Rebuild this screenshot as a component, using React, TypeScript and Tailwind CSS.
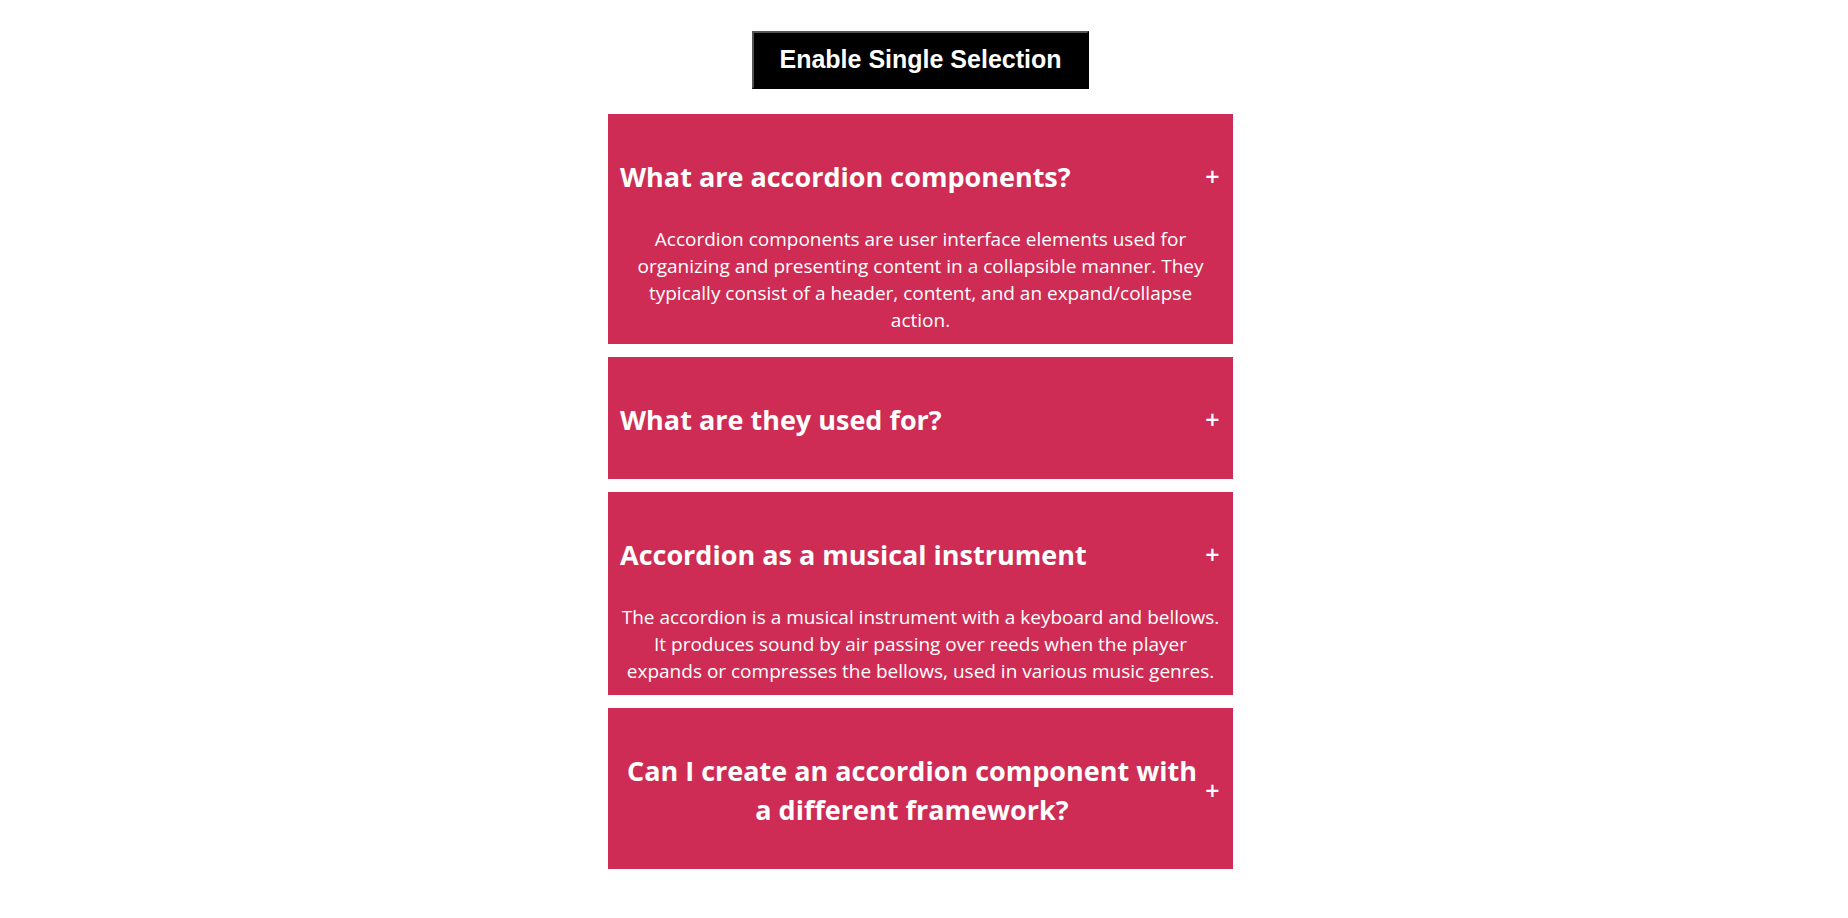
import { useState } from "react";

type Item = { id: string; question: string; answer: string };

const items: Item[] = [
  {
    id: "components",
    question: "What are accordion components?",
    answer:
      "Accordion components are user interface elements used for organizing and presenting content in a collapsible manner. They typically consist of a header, content, and an expand/collapse action.",
  },
  {
    id: "usage",
    question: "What are they used for?",
    answer:
      "They are employed in various contexts, including FAQs, product descriptions, settings menus, and data tables, to save screen space and improve user experience.",
  },
  {
    id: "instrument",
    question: "Accordion as a musical instrument",
    answer:
      "The accordion is a musical instrument with a keyboard and bellows. It produces sound by air passing over reeds when the player expands or compresses the bellows, used in various music genres.",
  },
  {
    id: "framework",
    question: "Can I create an accordion component with a different framework?",
    answer:
      "Yes, of course, it is very possible to create an accordion component with another framework.",
  },
];

type PanelProps = { item: Item; open: boolean; onToggle: () => void };

function Panel({ item, open, onToggle }: PanelProps) {
  return (
    <section className="bg-[#ce2c54] px-3 pt-[14px] pb-[10px]">
      <h2>
        <button
          type="button"
          aria-expanded={open}
          aria-controls={`${item.id}-answer`}
          onClick={onToggle}
          className="flex w-full cursor-pointer items-center justify-between pt-[29px] pb-[30px]"
        >
          <span className="text-center text-[27px] leading-[39px] font-bold">{item.question}</span>
          <span className="w-[17px] shrink-0 text-center text-[25px] leading-[39px] font-semibold">+</span>
        </button>
      </h2>
      <div id={`${item.id}-answer`} hidden={!open} className="text-center text-[19px] leading-[27px]">
        {item.answer}
      </div>
    </section>
  );
}

export default function App() {
  const [single, setSingle] = useState(false);
  const [open, setOpen] = useState<string[]>(["components", "instrument"]);

  const toggle = (id: string) =>
    setOpen((current) => {
      if (current.includes(id)) return current.filter((other) => other !== id);
      return single ? [id] : [...current, id];
    });

  return (
    <main className="flex flex-col items-center gap-[25px] bg-white pt-[31px] pr-[7px] pb-12 font-['Open_Sans','Noto_Sans',sans-serif] text-white">
      <button
        type="button"
        aria-pressed={single}
        onClick={() => setSingle(!single)}
        className="cursor-pointer border-2 border-t-[#555] border-r-black border-b-black border-l-[#555] bg-black px-[25px] pt-[11px] pb-[13px] font-['Liberation_Sans',Arial,sans-serif] text-[25px] leading-[30px] font-bold"
      >
        Enable Single Selection
      </button>
      <div className="flex w-full max-w-[625px] flex-col gap-[13px]">
        {items.map((item) => (
          <Panel key={item.id} item={item} open={open.includes(item.id)} onToggle={() => toggle(item.id)} />
        ))}
      </div>
    </main>
  );
}
